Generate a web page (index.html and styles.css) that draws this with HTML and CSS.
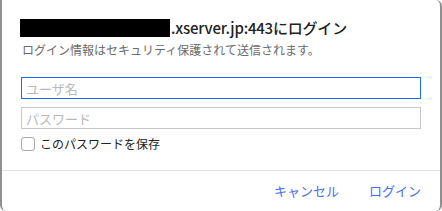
FILE: index.html
```html
<!DOCTYPE html>
<html lang="ja">
<head>
    <meta charset="UTF-8">
    <meta name="viewport" content="width=device-width, initial-scale=1.0">
    <title>ログイン</title>
    <link rel="stylesheet" href="styles.css">
</head>
<body>
    <div class="dialog">
        <div class="content">
            <h2 class="title"><span class="redacted"></span>.xserver.jp:443にログイン</h2>
            <p class="subtitle">ログイン情報はセキュリティ保護されて送信されます。</p>

            <div class="fields">
                <input type="text" class="field focused" placeholder="ユーザ名">
                <input type="password" class="field" placeholder="パスワード">
            </div>

            <label class="remember">
                <span class="box"></span>
                このパスワードを保存
            </label>
        </div>

        <div class="actions">
            <button class="link-btn">キャンセル</button>
            <button class="link-btn">ログイン</button>
        </div>
    </div>
</body>
</html>
```

FILE: styles.css
```css
body {
    margin: 0;
    font-family: "Noto Sans CJK JP", "Liberation Sans", sans-serif;
    background-color: #fff;
}
.dialog {
    width: 442px;
    height: 211px;
    box-sizing: border-box;
    border-left: 2px solid #8f8f8f;
    border-right: 2px solid #8f8f8f;
    border-radius: 0 6px 6px 6px;
    display: flex;
    flex-direction: column;
}
.content {
    padding: 18px 19px 0 18px;
    height: 152px;
    border-bottom: 1px solid #e1e1e1;
}
.title {
    margin: 0;
    display: flex;
    align-items: center;
    font-size: 15px;
    font-weight: 500;
    color: #222;
    height: 20px;
    line-height: 20px;
    letter-spacing: -0.2px;
}
.redacted {
    display: inline-block;
    width: 150px;
    height: 18px;
    margin-right: 1px;
    background-color: #000;
}
.subtitle {
    margin: 4px 0 0 2px;
    font-size: 12px;
    line-height: 16px;
    color: #6b6b6b;
}
.fields {
    margin-top: 19px;
    display: flex;
    flex-direction: column;
    gap: 8px;
}
.field {
    box-sizing: border-box;
    width: 400px;
    height: 22px;
    margin-left: 1px;
    padding: 0 4px;
    border: 1px solid #c8c8c8;
    font-family: inherit;
    font-size: 13px;
    outline: none;
}
.field::placeholder {
    color: #b8b8b8;
}
.field.focused {
    border-color: #1a6cf5;
}
.remember {
    margin: 6px 0 0 1px;
    display: flex;
    align-items: center;
    gap: 5px;
    font-size: 12px;
    color: #222;
}
.box {
    width: 14px;
    height: 14px;
    box-sizing: border-box;
    border: 1px solid #a8a8a8;
    border-radius: 3px;
}
.actions {
    flex: 1;
    display: flex;
    justify-content: flex-end;
    align-items: center;
    gap: 30px;
    padding: 0 19px 2px 0;
}
.link-btn {
    background: none;
    border: none;
    padding: 0;
    font-family: inherit;
    font-size: 13px;
    color: #4a6ef0;
}
```
